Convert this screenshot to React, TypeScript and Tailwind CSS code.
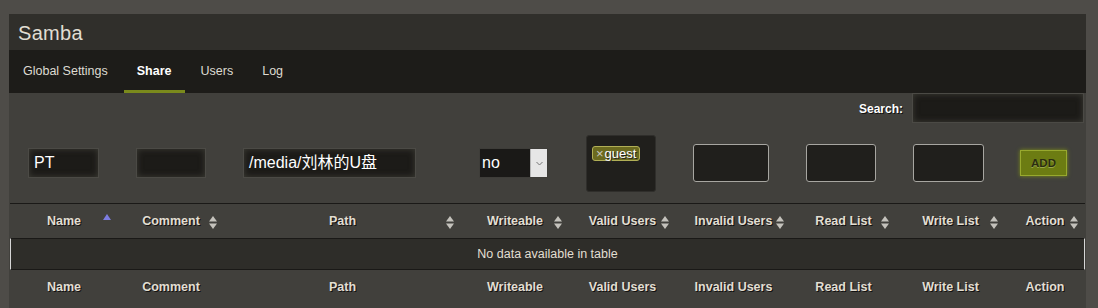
import React from 'react';

const sans = "font-['Liberation_Sans',Arial,sans-serif]";

const COLUMNS = [
  { label: 'Name', width: 'w-[108px]', sort: 'asc' },
  { label: 'Comment', width: 'w-[106px]', sort: 'both' },
  { label: 'Path', width: 'w-[237px]', sort: 'both' },
  { label: 'Writeable', width: 'w-[108px]', sort: 'both' },
  { label: 'Valid Users', width: 'w-[107px]', sort: 'both' },
  { label: 'Invalid Users', width: 'w-[115px]', sort: 'both' },
  { label: 'Read List', width: 'w-[105px]', sort: 'both' },
  { label: 'Write List', width: 'w-[109px]', sort: 'both' },
  { label: 'Action', width: 'w-[80px]', sort: 'both' },
];

function SortIcon({ kind }: { kind: string }) {
  if (kind === 'asc') {
    return (
      <svg width="8" height="13" viewBox="0 0 8 13" className="absolute right-[7px] top-[10px]">
        <path d="M4 0 L8 6 L0 6 Z" fill="#7c7ce0" />
      </svg>
    );
  }
  return (
    <svg width="8" height="13" viewBox="0 0 8 13" className="absolute right-[7px] top-[12px]">
      <path d="M4 0 L8 5.5 L0 5.5 Z" fill="#c4c2bc" />
      <path d="M0 7.5 L8 7.5 L4 13 Z" fill="#c4c2bc" />
    </svg>
  );
}

const headText = `${sans} text-[12.5px] font-bold text-[#e2ded2] [text-shadow:1px_1px_0_#111]`;

const inputBox =
  'h-[30px] bg-[#1c1b18] border border-[#4b4a45] shadow-[inset_0_0_6px_rgba(90,88,78,0.55)] text-[16px] text-white px-[5px] flex items-center';

const roundBox = 'h-[38px] bg-[#201f1c] border border-[#a7a6a1] rounded-[3px]';

export default function App() {
  return (
    <div className="w-[1098px] h-[308px] overflow-hidden bg-[#4e4c48] pt-[14px] pl-[9px] font-['Liberation_Sans','Noto_Sans_CJK_SC',sans-serif]">
      <div className="w-[1077px] h-[294px] bg-[#41403c]">
        {/* title */}
        <div className="h-[36px] bg-[#302f2b] pl-[9px] flex items-center">
          <span className="text-[20px] text-[#e0ddd3] tracking-[0.3px] pt-px">Samba</span>
        </div>

        {/* tabs */}
        <div className={`h-[43px] bg-[#1d1c19] pl-px flex gap-[3px] ${sans} text-[12.5px]`}>
          {['Global Settings', 'Share', 'Users', 'Log'].map(t => (
            <div
              key={t}
              className={
                'px-[13px] flex items-center border-b-[3px] pt-[3px] ' +
                (t === 'Share' ? 'border-[#7a8a1c] text-white font-bold' : 'border-transparent text-[#dedbd2]')
              }
            >
              {t}
            </div>
          ))}
        </div>

        {/* search */}
        <div className="h-[30px] flex justify-end items-center pr-[2px]">
          <span className={`${sans} text-[12px] font-bold text-white [text-shadow:1px_1px_0_#111] mr-[9px] pt-[2px]`}>Search:</span>
          <div className="w-[172px] h-[30px] bg-[#1c1b18] border border-[#4b4a45] shadow-[inset_0_0_6px_rgba(90,88,78,0.55)]" />
        </div>

        {/* add row */}
        <div className="h-[80px] flex items-center pl-px">
          <div className="w-[108px]">
            <div className={`${inputBox} ml-[18px] w-[71px]`}>PT</div>
          </div>
          <div className="w-[106px]">
            <div className={`${inputBox} ml-[18px] w-[70px]`} />
          </div>
          <div className="w-[237px]">
            <div className={`${inputBox} ml-[19px] w-[173px]`}>/media/刘林的U盘</div>
          </div>
          <div className="w-[108px]">
            <div className="ml-[18px] w-[69px] h-[30px] flex border border-[#3e3d39]">
              <div className="flex-1 bg-[#1a1917] text-white text-[16px] flex items-center pl-[2px]">no</div>
              <div className="w-[17px] bg-[#e6e6e6] border-l border-[#b5b5b5] flex items-center justify-center">
                <svg width="7" height="5" viewBox="0 0 7 5">
                  <path d="M0.5 1 L3.5 4 L6.5 1" fill="none" stroke="#777" strokeWidth="1" />
                </svg>
              </div>
            </div>
          </div>
          <div className="w-[107px]">
            <div className="ml-[17px] w-[70px] h-[57px] bg-[#201f1c] border border-[#2f2e2b] rounded-[3px] pt-[5px] pl-[5px]">
              <div className={`inline-flex items-center h-[15px] px-[3px] bg-[#6b6a1f] border border-[#b1af56] rounded-[3px] ${sans} text-[13px] leading-none`}>
                <span className="text-[#c9c8c0] mr-px">×</span>
                <span className="text-white [text-shadow:1px_1px_0_#222]">guest</span>
              </div>
            </div>
          </div>
          <div className="w-[115px]">
            <div className={`${roundBox} ml-[17px] w-[76px]`} />
          </div>
          <div className="w-[105px]">
            <div className={`${roundBox} ml-[15px] w-[70px]`} />
          </div>
          <div className="w-[109px]">
            <div className={`${roundBox} ml-[17px] w-[71px]`} />
          </div>
          <div className="w-[80px]">
            <button
              className={`ml-[15px] w-[47px] h-[26px] bg-[#6c7c12] border border-[#98a92e] shadow-[0_0_4px_#7d8f1a] ${sans} font-bold text-[11.5px] text-[#2a2d10] [text-shadow:0_1px_0_#9aa84a]`}
            >
              ADD
            </button>
          </div>
        </div>

        {/* table */}
        <div className="ml-px w-[1075px]">
          <div className="h-[35px] flex border-t border-[#1a1917]">
            {COLUMNS.map(c => (
              <div key={c.label} className={`${c.width} relative flex items-center justify-center pt-px ${headText}`}>
                {c.label}
                <SortIcon kind={c.sort} />
              </div>
            ))}
          </div>
          <div className="h-[32px] bg-[#2e2d29] border-y border-[#1a1917] border-l border-l-[#d6d6d6] border-r border-r-[#d6d6d6] flex items-center justify-center">
            <span className={`${sans} text-[12.5px] text-[#e2ded2]`}>No data available in table</span>
          </div>
          <div className="h-[35px] flex">
            {COLUMNS.map(c => (
              <div key={c.label} className={`${c.width} flex items-center justify-center ${headText}`}>
                {c.label}
              </div>
            ))}
          </div>
        </div>
      </div>
    </div>
  );
}
